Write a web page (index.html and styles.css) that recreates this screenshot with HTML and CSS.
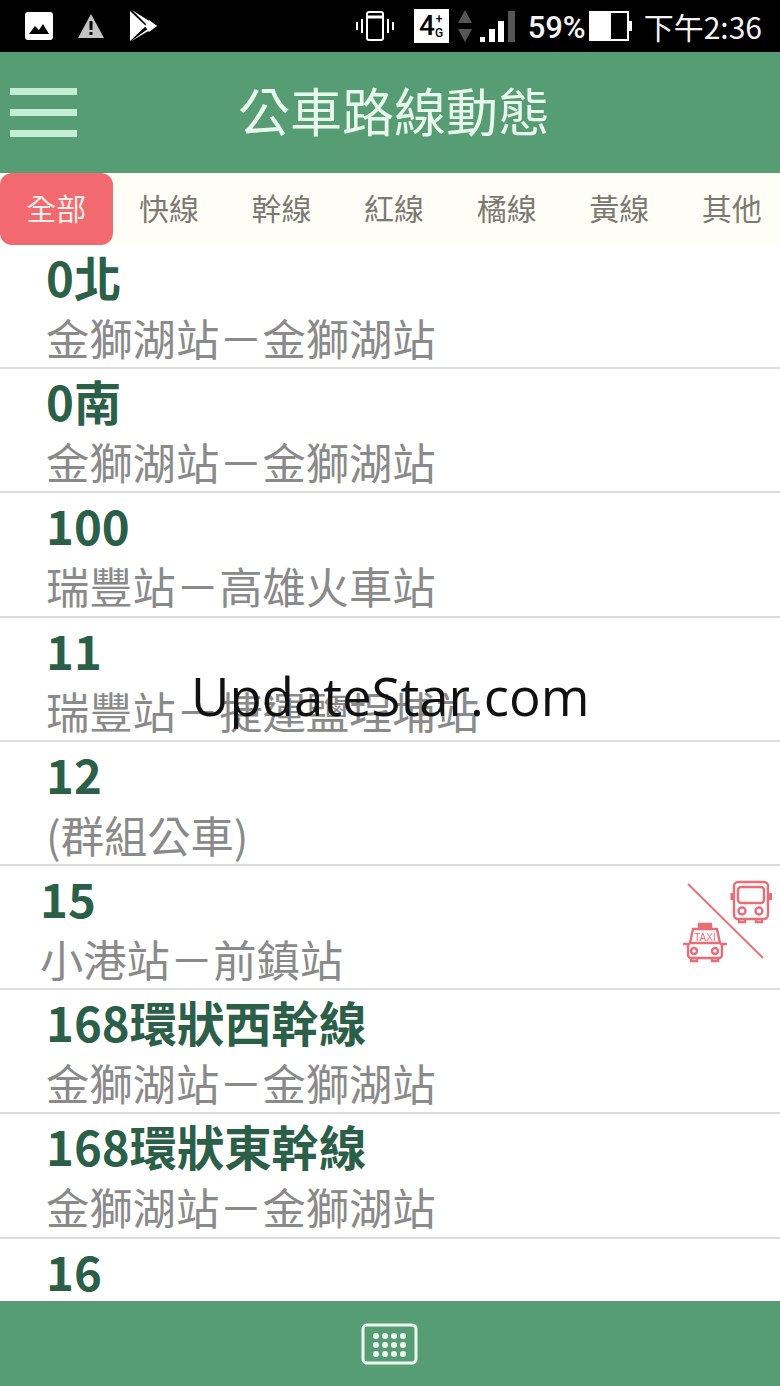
FILE: index.html
```html
<!DOCTYPE html>
<html>
<head>
    <title>公車路線動態</title>
    <link rel="stylesheet" href="styles.css">
</head>
<body>
    <div class="status-bar">
        <div class="status-left">
            <svg class="icon-photo" width="28" height="28" viewBox="0 0 28 28"><rect x="0" y="0" width="28" height="28" rx="3" fill="#fff"/><path d="M4 22 L10 14 L14 18 L18 12 L24 22 Z" fill="#000"/></svg>
            <svg class="icon-warn" width="28" height="26" viewBox="0 0 28 26"><path d="M14 1 L27 25 H1 Z" fill="#c4c4c4"/><rect x="12.5" y="8" width="3" height="9" fill="#000"/><rect x="12.5" y="19" width="3" height="3" fill="#000"/></svg>
            <svg class="icon-play" width="30" height="32" viewBox="0 0 30 32"><path d="M1 1 L17 16 L1 31 Z M3 0 L28 16 L19 16 Z" fill="#fff"/><path d="M20 10 L28 16 L20 22 L16 16 Z" fill="#fff"/><path d="M1 32 L20 18 L21 20 Z" fill="#fff"/></svg>
        </div>
        <div class="status-right">
            <svg class="icon-vibrate" width="38" height="32" viewBox="0 0 38 32" fill="none" stroke="#fff" stroke-width="2"><rect x="11" y="2" width="16" height="28" rx="2"/><path d="M12 7 H26" stroke-width="3"/><path d="M6 9 V23 M1 12 V20 M32 9 V23 M37 12 V20"/></svg>
            <div class="net-badge"><span class="net-four">4</span><span class="net-plus">+<br>G</span></div>
            <svg class="icon-arrows" width="16" height="34" viewBox="0 0 16 34"><path d="M8 1 L15 14 H1 Z M8 33 L15 20 H1 Z" fill="#555"/></svg>
            <svg class="icon-signal" width="36" height="34" viewBox="0 0 36 34"><rect x="0" y="28" width="5" height="5" fill="#fff"/><rect x="9" y="20" width="6" height="13" fill="#fff"/><rect x="18" y="12" width="6" height="21" fill="#fff"/><rect x="28" y="2" width="7" height="31" fill="#555"/></svg>
            <span class="status-text battery-pct">59%</span>
            <svg class="icon-battery" width="44" height="30" viewBox="0 0 44 30"><rect x="1" y="1" width="38" height="28" fill="#000" stroke="#fff" stroke-width="2"/><rect x="1" y="1" width="21" height="28" fill="#fff"/><rect x="39" y="10" width="4" height="10" fill="#fff"/></svg>
            <span class="status-text clock">下午2:36</span>
        </div>
    </div>

    <div class="app-header">
        <div class="menu-button"><span></span><span></span><span></span></div>
        <div class="app-title">公車路線動態</div>
    </div>

    <div class="tabs">
        <div class="tab active">全部</div>
        <div class="tab">快線</div>
        <div class="tab">幹線</div>
        <div class="tab">紅線</div>
        <div class="tab">橘線</div>
        <div class="tab">黃線</div>
        <div class="tab">其他</div>
    </div>

    <div class="route-list">
        <div class="route">
            <div class="route-name">0北</div>
            <div class="route-desc">金獅湖站－金獅湖站</div>
        </div>
        <div class="route">
            <div class="route-name">0南</div>
            <div class="route-desc">金獅湖站－金獅湖站</div>
        </div>
        <div class="route">
            <div class="route-name">100</div>
            <div class="route-desc">瑞豐站－高雄火車站</div>
        </div>
        <div class="route">
            <div class="route-name">11</div>
            <div class="route-desc">瑞豐站－捷運鹽埕埔站</div>
        </div>
        <div class="route">
            <div class="route-name">12</div>
            <div class="route-desc">(群組公車)</div>
        </div>
        <div class="route route-transfer">
            <div class="route-name">15</div>
            <div class="route-desc">小港站－前鎮站</div>
            <svg class="no-taxi" width="94" height="86" viewBox="0 0 94 86" fill="none" stroke="#ea6d75" stroke-width="2.4">
                <path d="M8 5 L83 79" stroke-width="1.8"/>
                <rect x="54" y="3" width="34" height="37" rx="4"/>
                <rect x="58" y="8" width="26" height="16" rx="3"/>
                <circle cx="62" cy="32" r="3.5"/>
                <circle cx="79" cy="32" r="3.5"/>
                <path d="M52.5 14 V21 M90 14 V21" stroke-width="4"/>
                <path d="M59 40 V43 H65 V40 M76 40 V43 H82 V40"/>
                <path d="M10 64 L13 50 H37 L40 64"/>
                <rect x="8" y="64" width="34" height="15" rx="3"/>
                <path d="M19 50 V45 H31 V50" fill="#ea6d75"/>
                <circle cx="14" cy="72" r="3"/>
                <circle cx="35" cy="72" r="3"/>
                <path d="M3 65 H8 M42 65 H47"/>
                <path d="M11 79 V82 H17 V79 M32 79 V82 H38 V79"/>
                <text x="25" y="62" class="taxi-text">TAXI</text>
            </svg>
        </div>
        <div class="route">
            <div class="route-name">168環狀西幹線</div>
            <div class="route-desc">金獅湖站－金獅湖站</div>
        </div>
        <div class="route">
            <div class="route-name">168環狀東幹線</div>
            <div class="route-desc">金獅湖站－金獅湖站</div>
        </div>
        <div class="route">
            <div class="route-name">16</div>
        </div>
    </div>

    <div class="app-footer">
        <svg width="58" height="44" viewBox="0 0 58 44">
            <rect x="2" y="3" width="53" height="38" rx="4" fill="none" stroke="#eefaf0" stroke-width="3"/>
            <g fill="#eefaf0">
                <circle cx="15" cy="14" r="3"/><circle cx="24" cy="14" r="3"/><circle cx="33" cy="14" r="3"/><circle cx="42" cy="14" r="3"/>
                <circle cx="15" cy="23" r="3"/><circle cx="24" cy="23" r="3"/><circle cx="33" cy="23" r="3"/><circle cx="42" cy="23" r="3"/>
                <circle cx="15" cy="32" r="3"/><circle cx="24" cy="32" r="3"/><circle cx="33" cy="32" r="3"/><circle cx="42" cy="32" r="3"/>
            </g>
        </svg>
    </div>

    <div class="watermark">UpdateStar.com</div>
</body>
</html>
```

FILE: styles.css
```css
* {
    box-sizing: border-box;
}
body {
    position: relative;
    display: flex;
    flex-direction: column;
    height: 1386px;
    margin: 0;
    overflow: hidden;
    font-family: "Noto Sans CJK TC", "Noto Sans", sans-serif;
    background-color: #fff;
}
.status-bar {
    display: flex;
    flex: none;
    align-items: center;
    justify-content: space-between;
    height: 52px;
    padding: 0 18px 0 25px;
    background-color: #000;
}
.status-left {
    display: flex;
    align-items: center;
    gap: 24px;
}
.status-right {
    display: flex;
    align-items: center;
    gap: 8px;
}
.net-badge {
    display: flex;
    align-items: center;
    justify-content: center;
    width: 35px;
    height: 34px;
    margin-left: 12px;
    color: #000;
    background-color: #fff;
    font-family: "Roboto", sans-serif;
    font-weight: 500;
}
.net-four {
    font-size: 28px;
    line-height: 30px;
}
.net-plus {
    font-size: 12px;
    line-height: 14px;
    text-align: center;
}
.icon-signal {
    margin-left: -1px;
}
.icon-battery {
    margin-left: -5px;
}
.status-text {
    color: #f4f4f4;
    font-size: 30px;
    line-height: 40px;
    white-space: nowrap;
}
.battery-pct {
    margin-left: 4px;
    padding-top: 4px;
    font-family: "Roboto", sans-serif;
    font-size: 31px;
    font-weight: 500;
}
.clock {
    margin-left: 3px;
}
.app-header {
    position: relative;
    display: flex;
    flex: none;
    align-items: center;
    justify-content: center;
    height: 121px;
    padding: 0 0 6px 8px;
    background-color: #569c75;
}
.menu-button {
    position: absolute;
    top: 36px;
    left: 10px;
    display: flex;
    flex-direction: column;
    gap: 14px;
    width: 67px;
}
.menu-button span {
    height: 7px;
    background-color: #c4eed3;
}
.app-title {
    color: #e9f8ec;
    font-size: 52px;
    line-height: 70px;
}
.tabs {
    display: grid;
    flex: none;
    grid-template-columns: repeat(7, 112.6px);
    height: 72px;
    overflow: hidden;
    background-color: #fffef6;
}
.tab {
    display: flex;
    align-items: center;
    justify-content: center;
    padding-bottom: 4px;
    color: #7a7a72;
    font-size: 30px;
}
.tab.active {
    color: #fbeee6;
    background-color: #f2696f;
    border-radius: 12px;
}
.route-list {
    flex: 1;
    min-height: 0;
}
.route {
    height: 124.2px;
    padding-left: 46px;
    border-bottom: 2px solid #dcdcdc;
}
.route-transfer {
    position: relative;
    padding-left: 40px;
}
.route-name {
    height: 62px;
    padding-top: 2px;
    color: #2c5f48;
    font-size: 47.3px;
    font-weight: 700;
    line-height: 60px;
}
.route-desc {
    color: #8a8a8a;
    font-size: 43.3px;
    line-height: 60px;
}
.no-taxi {
    position: absolute;
    top: 13px;
    right: 6px;
}
.taxi-text {
    fill: #ea6d75;
    stroke: none;
    font-family: "Liberation Sans", sans-serif;
    font-size: 10px;
    text-anchor: middle;
}
.app-footer {
    display: flex;
    flex: none;
    align-items: center;
    justify-content: center;
    height: 85px;
    background-color: #569c75;
}
.watermark {
    position: absolute;
    top: 658px;
    left: 191px;
    color: #111;
    font-family: "Open Sans", sans-serif;
    font-size: 52.7px;
    line-height: 76px;
    white-space: nowrap;
}
```
